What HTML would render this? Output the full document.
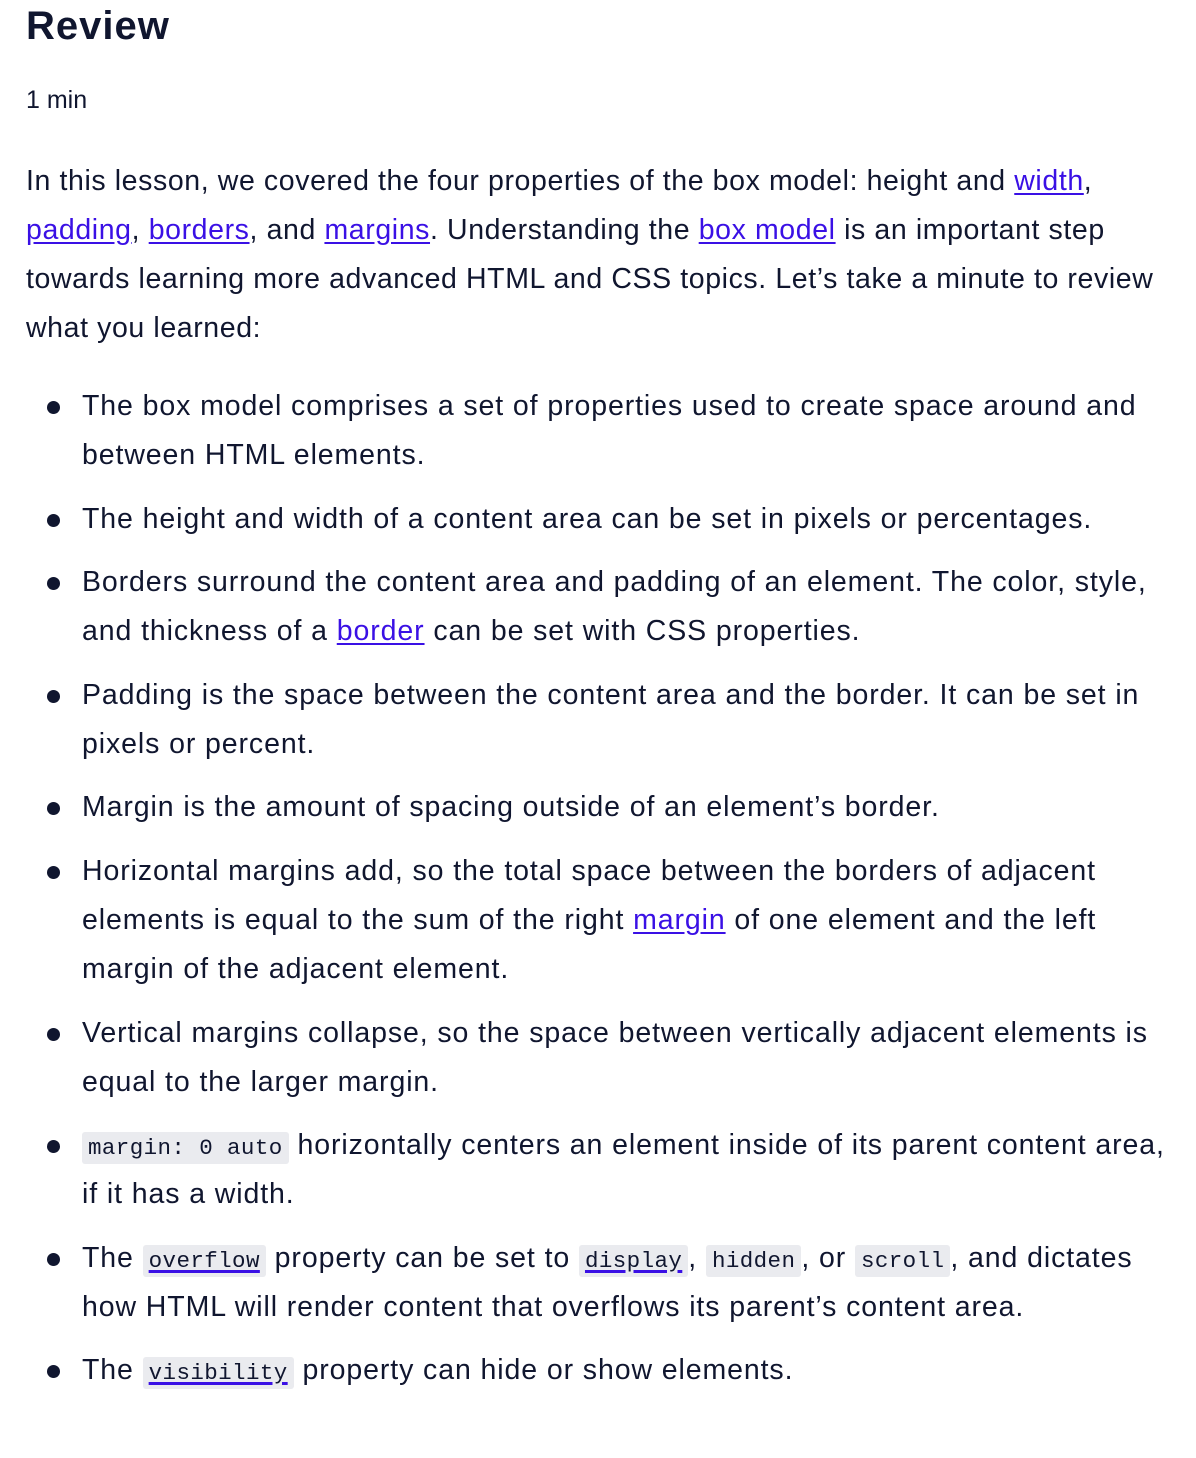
<!DOCTYPE html>
<html><head><meta charset="utf-8"><style>
body{margin:0;background:#fff;color:#10162f;font-family:"Liberation Sans",sans-serif;width:1196px;height:1458px;overflow:hidden}
.w{position:absolute;left:26px;top:0;width:1170px}
h1{font-size:40px;font-weight:bold;margin:0;line-height:52px;height:52px;letter-spacing:1px}
.min{font-size:25px;margin:0;position:absolute;top:84px;line-height:32px}
p.i{position:absolute;top:157px;margin:0;font-size:28.5px;letter-spacing:0.6px;line-height:49px;white-space:nowrap}
a{color:#3a10e5;text-decoration:underline;text-underline-offset:3px}
ul{position:absolute;top:382px;left:0;margin:0;padding:0 0 0 56px;list-style:none;font-size:28.5px;letter-spacing:0.9px;line-height:49px;white-space:nowrap}
li{position:relative;margin-bottom:14.6px;height:auto}
li:before{content:"";position:absolute;left:-35px;top:19px;width:13px;height:13px;border-radius:50%;background:#10162f}
code{font-family:"Liberation Mono","DejaVu Sans Mono",monospace;font-size:22.5px;letter-spacing:0.4px;background:#eaebef;padding:3px 6px;border-radius:3px;line-height:1}
code a{color:#10162f;text-decoration-color:#3a10e5;text-decoration-thickness:3px}
</style></head><body><div class="w">
<h1>Review</h1>
<p class="min">1 min</p>
<p class="i">In this lesson, we covered the four properties of the box model: height and <a>width</a>,<br><a>padding</a>, <a>borders</a>, and <a>margins</a>. Understanding the <a>box model</a> is an important step<br>towards learning more advanced HTML and CSS topics. Let’s take a minute to review<br>what you learned:</p>
<ul>
<li>The box model comprises a set of properties used to create space around and<br>between HTML elements.</li>
<li>The height and width of a content area can be set in pixels or percentages.</li>
<li>Borders surround the content area and padding of an element. The color, style,<br>and thickness of a <a>border</a> can be set with CSS properties.</li>
<li>Padding is the space between the content area and the border. It can be set in<br>pixels or percent.</li>
<li>Margin is the amount of spacing outside of an element’s border.</li>
<li>Horizontal margins add, so the total space between the borders of adjacent<br>elements is equal to the sum of the right <a>margin</a> of one element and the left<br>margin of the adjacent element.</li>
<li>Vertical margins collapse, so the space between vertically adjacent elements is<br>equal to the larger margin.</li>
<li><code>margin: 0 auto</code> horizontally centers an element inside of its parent content area,<br>if it has a width.</li>
<li>The <code><a>overflow</a></code> property can be set to <code><a>display</a></code>, <code>hidden</code>, or <code>scroll</code>, and dictates<br>how HTML will render content that overflows its parent’s content area.</li>
<li>The <code><a>visibility</a></code> property can hide or show elements.</li>
</ul>
</div></body></html>
